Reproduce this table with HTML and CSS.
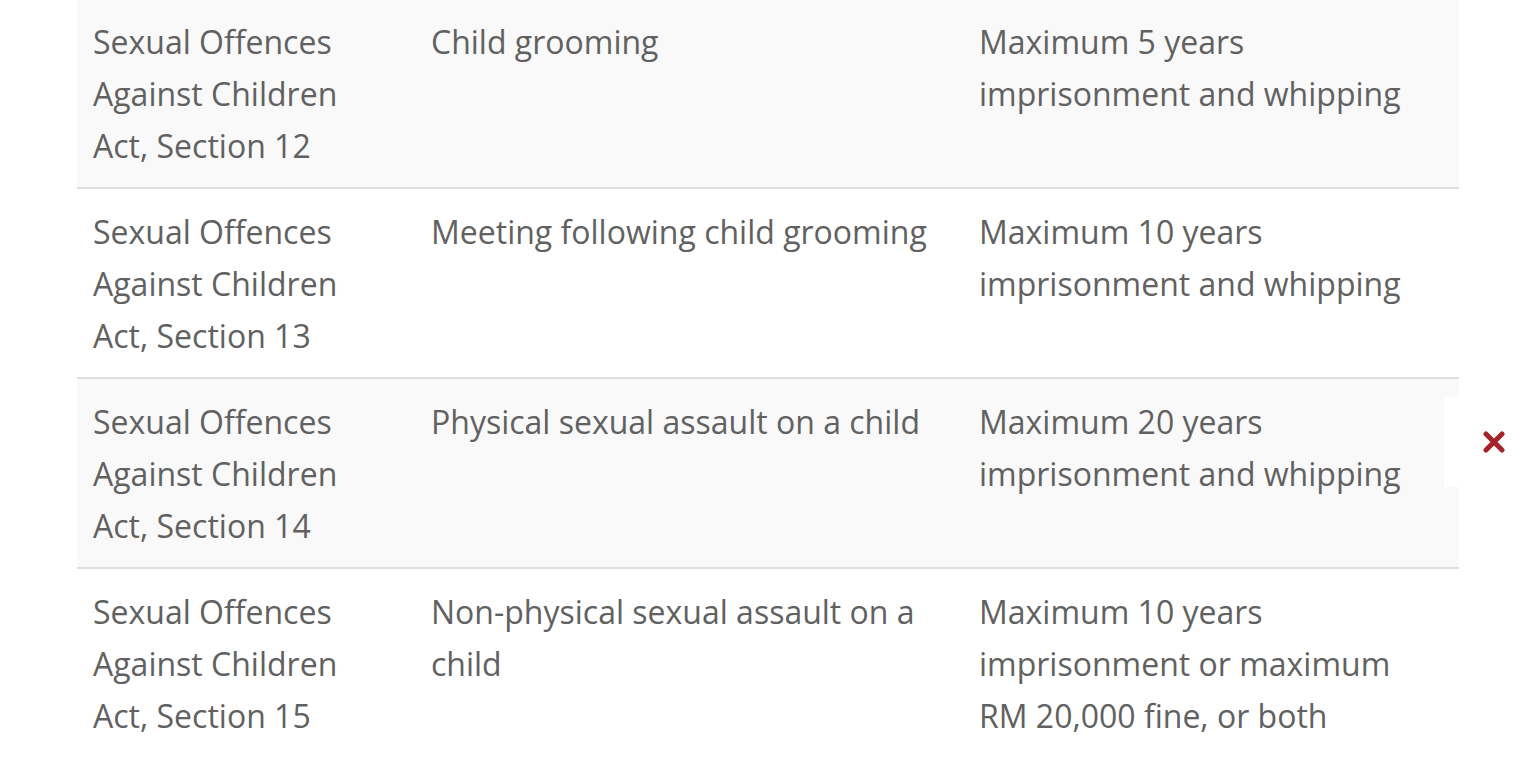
FILE: index.html
```html
<!DOCTYPE html>
<html>
<head>
<meta charset="utf-8">
<link rel="stylesheet" href="styles.css">
</head>
<body>
<div class="page">
  <table class="law-table">
    <colgroup>
      <col class="c1"><col class="c2"><col class="c3">
    </colgroup>
    <tbody>
      <tr class="odd">
        <td>Sexual Offences Against Children Act, Section 12</td>
        <td>Child grooming</td>
        <td>Maximum 5 years imprisonment and whipping</td>
      </tr>
      <tr>
        <td>Sexual Offences Against Children Act, Section 13</td>
        <td>Meeting following child grooming</td>
        <td>Maximum 10 years imprisonment and whipping</td>
      </tr>
      <tr class="odd">
        <td>Sexual Offences Against Children Act, Section 14</td>
        <td>Physical sexual assault on a child</td>
        <td>Maximum 20 years imprisonment and whipping</td>
      </tr>
      <tr>
        <td>Sexual Offences Against Children Act, Section 15</td>
        <td>Non-physical sexual assault on a child</td>
        <td>Maximum 10 years imprisonment or maximum RM 20,000 fine, or both</td>
      </tr>
    </tbody>
  </table>
</div>
<div class="float-box">
  <button class="close" aria-label="Close">
    <svg width="22" height="22" viewBox="0 0 22 22"><path d="M3 3 L19 19 M19 3 L3 19" stroke="#a5232b" stroke-width="5" stroke-linecap="round"/></svg>
  </button>
</div>
</body>
</html>
```

FILE: styles.css
```css
html, body { margin: 0; padding: 0; background: #fff; }
body { font-family: "Open Sans", "Liberation Sans", sans-serif; color: #616161; overflow: hidden; height: 763px; }
.page { padding-left: 77px; width: 1382px; }
.law-table { width: 1382px; margin-top: -3px; border-collapse: collapse; table-layout: fixed; font-size: 32px; line-height: 52px; }
.c1 { width: 338px; }
.c2 { width: 548px; }
.c3 { width: 496px; }
.law-table td { vertical-align: top; padding: 17px 16px 15px 16px; border-top: 2px solid #dedede; }
.law-table tr.odd td { background: #f9f9f9; }
.float-box { position: absolute; left: 1444px; top: 397px; width: 92px; height: 90px; background: #fff; display: flex; align-items: center; justify-content: center; }
.close { border: 0; background: transparent; padding: 0; margin: 0 0 0 8px; width: 22px; height: 22px; display: block; cursor: pointer; }
.close svg { display: block; }
```
